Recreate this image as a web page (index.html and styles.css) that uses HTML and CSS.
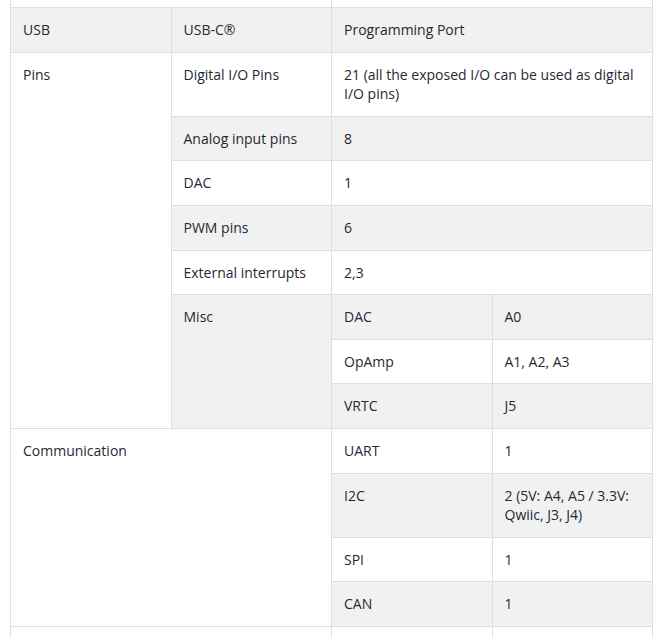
FILE: index.html
```html
<!DOCTYPE html>
<html>
<head>
<meta charset="utf-8">
<link rel="stylesheet" href="styles.css">
</head>
<body>
<div class="page">
<table class="spec">
  <colgroup><col class="c"><col class="c"><col class="c"><col class="c"></colgroup>
  <tbody>
    <tr class="cut"><td colspan="2"></td><td colspan="2"></td></tr>
    <tr class="alt"><td>USB</td><td>USB-C®</td><td colspan="2">Programming Port</td></tr>
    <tr><td rowspan="8">Pins</td><td>Digital I/O Pins</td><td colspan="2">21 (all the exposed I/O can be used as digital I/O pins)</td></tr>
    <tr class="alt"><td>Analog input pins</td><td colspan="2">8</td></tr>
    <tr><td>DAC</td><td colspan="2">1</td></tr>
    <tr class="alt"><td>PWM pins</td><td colspan="2">6</td></tr>
    <tr><td>External interrupts</td><td colspan="2">2,3</td></tr>
    <tr class="alt"><td rowspan="3">Misc</td><td>DAC</td><td>A0</td></tr>
    <tr><td>OpAmp</td><td>A1, A2, A3</td></tr>
    <tr class="alt"><td>VRTC</td><td>J5</td></tr>
    <tr><td colspan="2" rowspan="4">Communication</td><td>UART</td><td>1</td></tr>
    <tr class="alt"><td>I2C</td><td>2 (5V: A4, A5 / 3.3V: Qwiic, J3, J4)</td></tr>
    <tr><td>SPI</td><td>1</td></tr>
    <tr class="alt"><td>CAN</td><td>1</td></tr>
    <tr><td colspan="2">&nbsp;</td><td>&nbsp;</td><td>&nbsp;</td></tr>
  </tbody>
</table>
</div>
</body>
</html>
```
FILE: styles.css
```css
html, body {
  margin: 0;
  padding: 0;
  background: #ffffff;
  overflow: hidden;
}
.page {
  padding: 0 9px 0 10px;
  height: 638px;
  overflow: hidden;
}
.spec {
  width: 643px;
  table-layout: fixed;
  border-collapse: collapse;
  font-family: "Open Sans", "Liberation Sans", sans-serif;
  font-size: 14px;
  line-height: 1.4;
  color: #1f2933;
}
.spec .c { width: 25%; }
.spec td {
  border: 1px solid #dcdfe3;
  padding: 12px;
  vertical-align: top;
  text-align: left;
  background: #ffffff;
}
.spec tr.alt td {
  background: #f1f1f1;
}
.spec tr.cut td {
  height: 7px;
  padding: 0;
  border-top: 0;
}
```
